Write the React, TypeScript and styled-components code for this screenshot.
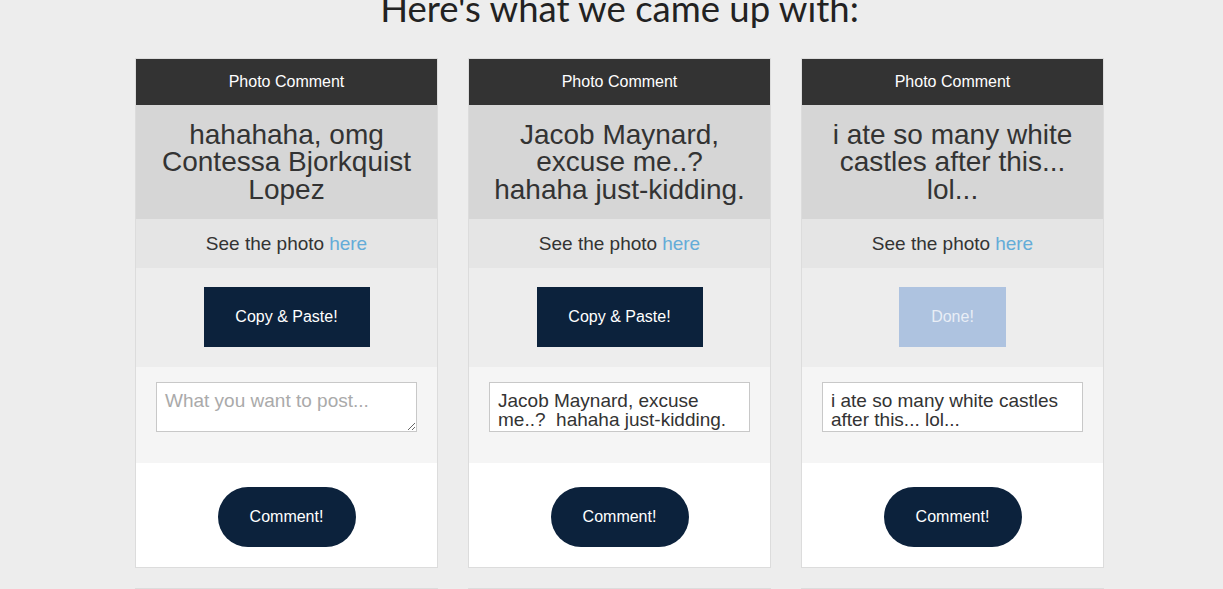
import React from "react";
import styled, { createGlobalStyle } from "styled-components";

const Global = createGlobalStyle`
  html, body { margin: 0; padding: 0; background: #ededed; overflow: hidden; }
  body { font-family: "Liberation Sans", Arial, sans-serif; color: #333; }
`;

const Page = styled.div`
  display: flex;
  flex-direction: column;
  align-items: center;
  padding-left: 16px;
`;

const Heading = styled.h1`
  margin: -14px 0 0;
  font-family: Lato, "Open Sans", sans-serif;
  font-weight: 400;
  font-size: 36.5px;
  line-height: 44px;
  color: #222;
  height: 44px;
`;

const Grid = styled.div`
  display: grid;
  grid-template-columns: repeat(3, 303px);
  column-gap: 30px;
  row-gap: 20px;
  margin-top: 28px;
`;

const Card = styled.div`
  border: 1px solid #dcdcdc;
  background: #fff;
  display: flex;
  flex-direction: column;
`;

const Header = styled.div`
  height: 46px;
  background: #333;
  color: #fff;
  font-size: 16px;
  display: flex;
  align-items: center;
  justify-content: center;
`;

const Title = styled.div`
  background: #d6d6d6;
  height: 114px;
  box-sizing: border-box;
  padding: 0 20px;
  display: flex;
  align-items: center;
  justify-content: center;
  text-align: center;
  font-size: 28px;
  line-height: 27.5px;
  color: #333;
`;

const SeeRow = styled.div`
  background: #e5e5e5;
  height: 49px;
  display: flex;
  align-items: center;
  justify-content: center;
  font-size: 19px;
  color: #333;
`;

const Link = styled.a`
  color: #64acd8;
  text-decoration: none;
  margin-left: 5px;
`;

const ButtonRow = styled.div`
  background: #ededed;
  height: 99px;
  box-sizing: border-box;
  padding-top: 19px;
  display: flex;
  align-items: flex-start;
  justify-content: center;
`;

const CopyButton = styled.button<{ $done?: boolean }>`
  height: 60px;
  width: ${(p) => (p.$done ? "107px" : "166px")};
  border: none;
  background: ${(p) => (p.$done ? "#aec3e0" : "#0c223c")};
  color: ${(p) => (p.$done ? "#e9eef6" : "#fff")};
  font-family: "Liberation Sans", Arial, sans-serif;
  font-size: 16px;
  padding: 0;
  cursor: pointer;
`;

const TextRow = styled.div`
  background: #f5f5f5;
  height: 96px;
  box-sizing: border-box;
  padding: 15px 20px 0;
`;

const TextArea = styled.textarea<{ $resizable?: boolean }>`
  display: block;
  width: 261px;
  height: 50px;
  box-sizing: border-box;
  border: 1px solid #c8c8c8;
  background: #fff;
  padding: 8px 8px 0;
  font-family: "Liberation Sans", Arial, sans-serif;
  font-size: 19px;
  line-height: 19px;
  color: #333;
  resize: ${(p) => (p.$resizable ? "both" : "none")};
  overflow: hidden;
  outline: none;
  &::placeholder { color: #aaa; }
`;

const CommentRow = styled.div`
  background: #fff;
  height: 104px;
  box-sizing: border-box;
  padding-top: 24px;
  display: flex;
  justify-content: center;
`;

const CommentButton = styled.button`
  width: 138px;
  height: 60px;
  border: none;
  border-radius: 30px;
  background: #0c223c;
  color: #fff;
  font-family: "Liberation Sans", Arial, sans-serif;
  font-size: 16px;
  padding: 0;
  cursor: pointer;
`;

type Item = { title: string; text: string; done: boolean };

const items: Item[] = [
  { title: "hahahaha, omg Contessa Bjorkquist Lopez", text: "", done: false },
  { title: "Jacob Maynard, excuse me..? hahaha just-kidding.", text: "Jacob Maynard, excuse me..?  hahaha just-kidding.", done: false },
  { title: "i ate so many white castles after this... lol...", text: "i ate so many white castles after this... lol...", done: true },
];

const CommentCard = ({ item }: { item: Item }) => (
  <Card>
    <Header>Photo Comment</Header>
    <Title>{item.title}</Title>
    <SeeRow>
      See the photo<Link href="#">here</Link>
    </SeeRow>
    <ButtonRow>
      <CopyButton $done={item.done}>{item.done ? "Done!" : "Copy & Paste!"}</CopyButton>
    </ButtonRow>
    <TextRow>
      <TextArea
        $resizable={!item.text}
        placeholder="What you want to post..."
        defaultValue={item.text}
      />
    </TextRow>
    <CommentRow>
      <CommentButton>Comment!</CommentButton>
    </CommentRow>
  </Card>
);

export default function App() {
  return (
    <>
      <Global />
      <Page>
        <Heading>Here's what we came up with:</Heading>
        <Grid>
          {items.map((it, i) => (
            <CommentCard key={i} item={it} />
          ))}
          {items.map((it, i) => (
            <CommentCard key={"b" + i} item={it} />
          ))}
        </Grid>
      </Page>
    </>
  );
}
